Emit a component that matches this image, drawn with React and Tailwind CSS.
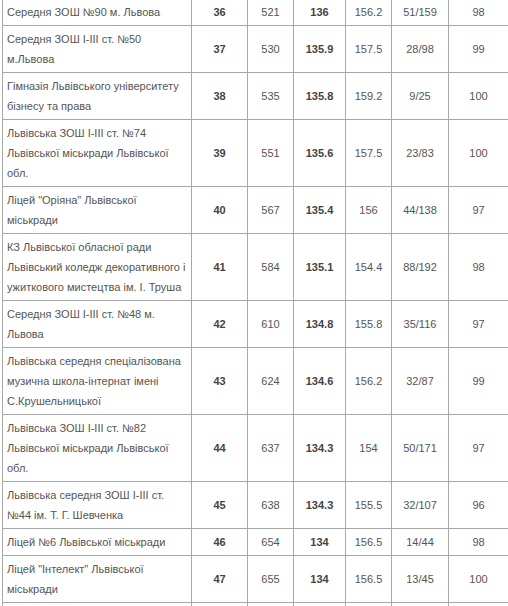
import React from "react";

const rows = [
  ["Середня ЗОШ №90 м. Львова", "36", "521", "136", "156.2", "51/159", "98"],
  ["Середня ЗОШ І-ІІІ ст. №50 м.Львова", "37", "530", "135.9", "157.5", "28/98", "99"],
  ["Гімназія Львівського університету бізнесу та права", "38", "535", "135.8", "159.2", "9/25", "100"],
  ["Львівська ЗОШ І-ІІІ ст. №74 Львівської міськради Львівської обл.", "39", "551", "135.6", "157.5", "23/83", "100"],
  ["Ліцей \"Оріяна\" Львівської міськради", "40", "567", "135.4", "156", "44/138", "97"],
  ["КЗ Львівської обласної ради Львівський коледж декоративного і ужиткового мистецтва ім. І. Труша", "41", "584", "135.1", "154.4", "88/192", "98"],
  ["Середня ЗОШ І-ІІІ ст. №48 м. Львова", "42", "610", "134.8", "155.8", "35/116", "97"],
  ["Львівська середня спеціалізована музична школа-інтернат імені С.Крушельницької", "43", "624", "134.6", "156.2", "32/87", "99"],
  ["Львівська ЗОШ І-ІІІ ст. №82 Львівської міськради Львівської обл.", "44", "637", "134.3", "154", "50/171", "97"],
  ["Львівська середня ЗОШ І-ІІІ ст. №44 ім. Т. Г. Шевченка", "45", "638", "134.3", "155.5", "32/107", "96"],
  ["Ліцей №6 Львівської міськради", "46", "654", "134", "156.5", "14/44", "98"],
  ["Ліцей \"Інтелект\" Львівської міськради", "47", "655", "134", "156.5", "13/45", "100"],
  ["\u00a0", "\u00a0", "\u00a0", "\u00a0", "\u00a0", "\u00a0", "\u00a0"],
];

const cell = "border border-[#a8a8a8] py-[3px] px-[3px] align-middle font-['Liberation_Sans',Arial,sans-serif] text-[11px] leading-[20px]";

export default function App() {
  return (
    <div className="w-[508px] h-[606px] overflow-hidden bg-white font-['Liberation_Sans',Arial,sans-serif]">
      <table className="ml-[2px] -mt-[2px] w-[506px] table-fixed border-collapse text-[#555]">
        <colgroup>
          <col className="w-[189px]" />
          <col className="w-[56px]" />
          <col className="w-[46px]" />
          <col className="w-[52px]" />
          <col className="w-[46px]" />
          <col className="w-[57px]" />
          <col className="w-[60px]" />
        </colgroup>
        <tbody>
          {rows.map((r, i) => (
            <tr key={i}>
              <td className={cell + " pl-[4px] text-left"}>{r[0]}</td>
              <td className={cell + " text-center font-bold text-[#444]"}>{r[1]}</td>
              <td className={cell + " text-center"}>{r[2]}</td>
              <td className={cell + " text-center font-bold text-[#444]"}>{r[3]}</td>
              <td className={cell + " text-center"}>{r[4]}</td>
              <td className={cell + " text-center"}>{r[5]}</td>
              <td className={cell + " text-center"}>{r[6]}</td>
            </tr>
          ))}
        </tbody>
      </table>
    </div>
  );
}
